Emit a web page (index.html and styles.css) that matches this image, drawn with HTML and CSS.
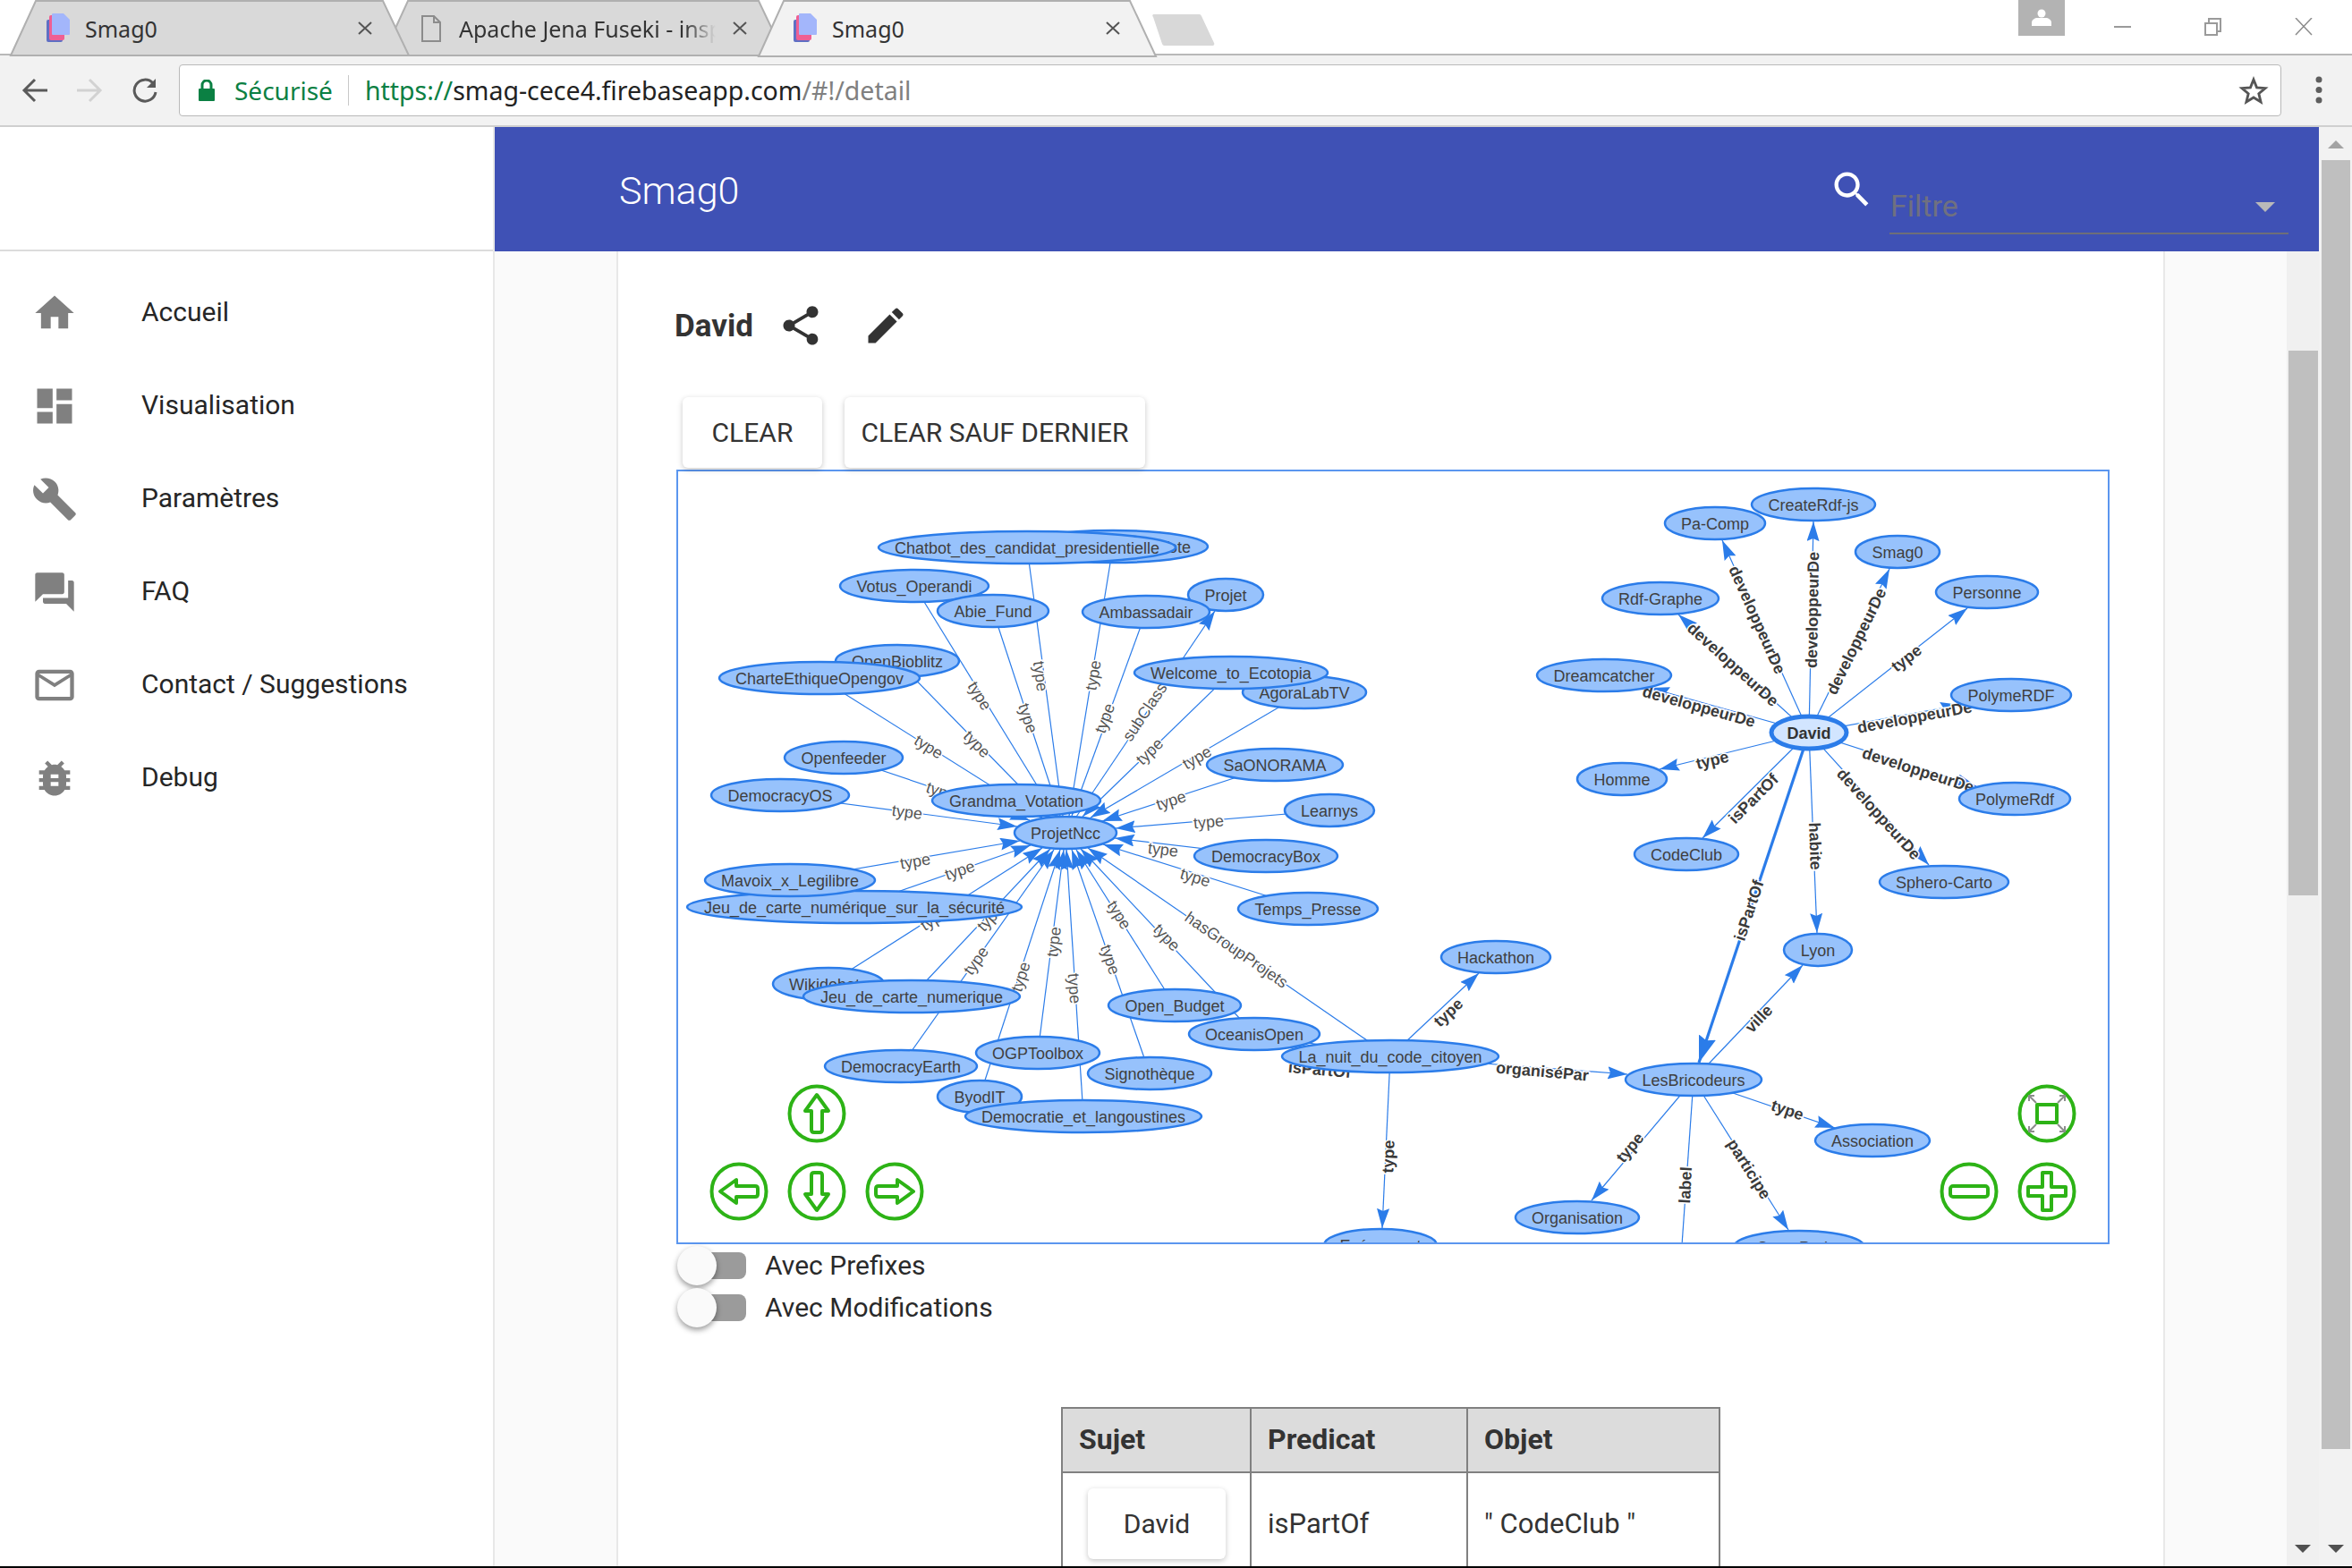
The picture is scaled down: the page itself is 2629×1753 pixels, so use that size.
FILE: index.html
```html
<!DOCTYPE html>
<html lang="fr">
<head>
<meta charset="utf-8">
<title>Smag0</title>
<link rel="stylesheet" href="styles.css">
</head>
<body>
<div class="window">
  <div class="tabstrip">
    <div class="tab tab-a">
      <svg class="tab-shape" width="445" height="61"><polygon points="0,61 28,0 416,0 445,61"/></svg>
      <svg class="favicon" width="28" height="34" viewBox="0 0 28 34"><rect x="1" y="7" width="18" height="25" rx="2" fill="#5f6fc4"/><rect x="4" y="2" width="17" height="28" rx="2" fill="#ef5f93"/><path d="M7 1a1 1 0 0 1 1-1h12l7 7v16a1 1 0 0 1-1 1H8a1 1 0 0 1-1-1z" fill="#a3b6fb"/></svg>
      <span class="tab-title">Smag0</span>
      <svg class="tab-close" width="16" height="15" viewBox="0 0 16 15"><path d="M1 1l14 13M15 1L1 14"/></svg>
    </div>
    <div class="tab tab-b">
      <svg class="tab-shape" width="449" height="61"><polygon points="0,61 28,0 420,0 449,61"/></svg>
      <svg class="docicon" width="22" height="30" viewBox="0 0 22 30"><path d="M1 1h13l7 7v21H1zM14 1v7h7"/></svg>
      <span class="tab-title tab-fade">Apache Jena Fuseki - inspect</span>
      <svg class="tab-close" width="16" height="15" viewBox="0 0 16 15"><path d="M1 1l14 13M15 1L1 14"/></svg>
    </div>
    <div class="tab tab-c">
      <svg class="tab-shape tab-shape-active" width="444" height="62"><polygon points="0,62 28,0 415,0 444,62"/></svg>
      <svg class="favicon" width="28" height="34" viewBox="0 0 28 34"><rect x="1" y="7" width="18" height="25" rx="2" fill="#5f6fc4"/><rect x="4" y="2" width="17" height="28" rx="2" fill="#ef5f93"/><path d="M7 1a1 1 0 0 1 1-1h12l7 7v16a1 1 0 0 1-1 1H8a1 1 0 0 1-1-1z" fill="#a3b6fb"/></svg>
      <span class="tab-title">Smag0</span>
      <svg class="tab-close" width="16" height="15" viewBox="0 0 16 15"><path d="M1 1l14 13M15 1L1 14"/></svg>
    </div>
    <svg class="newtab" width="70" height="35" viewBox="0 0 70 35"><path d="M4 0h48a3 3 0 0 1 3 2l14 30a2 2 0 0 1-2 3H14a3 3 0 0 1-3-2L1 3a2 2 0 0 1 3-3z"/></svg>
    <div class="profile"><svg width="24" height="20" viewBox="0 0 24 20"><circle cx="12" cy="5" r="4.500"/><path d="M1 19v-4c0-3 4-5 6-5h10c2 0 6 2 6 5v4z"/></svg></div>
    <div class="winctl">
      <svg width="20" height="20" viewBox="0 0 20 20"><path d="M0 10h19" class="wc"/></svg>
      <svg width="20" height="20" viewBox="0 0 20 20"><path d="M1 6h13v13H1zM5 6V1h13v14h-4" class="wc"/></svg>
      <svg width="20" height="20" viewBox="0 0 20 20"><path d="M1 0l18 19M19 0L1 19" class="wcx"/></svg>
    </div>
  </div>

  <div class="toolbar">
    <svg class="tool" width="30" height="28" viewBox="0 0 30 28"><path d="M29 14H4M15 2L3 14l12 12" class="tool-dark"/></svg>
    <svg class="tool" width="30" height="28" viewBox="0 0 30 28"><path d="M1 14h25M15 2l12 12-12 12" class="tool-light"/></svg>
    <svg class="tool" width="30" height="28" viewBox="0 0 30 28"><path d="M25 6a12 12 0 1 0 3 10" class="tool-dark"/><path d="M28 1v10H18z" class="tool-fill"/></svg>
    <div class="address">
      <svg class="lock" width="18" height="24" viewBox="0 0 18 24"><path d="M4 10V6a5 5 0 0 1 10 0v4" class="lock-arc"/><rect y="10" width="18" height="14" rx="1" class="lock-body"/></svg>
      <span class="secure">Sécurisé</span>
      <span class="addr-sep"></span>
      <span class="url"><span class="url-scheme">https://</span><span class="url-host">smag-cece4.firebaseapp.com</span><span class="url-path">/#!/detail</span></span>
      <svg class="star" width="36" height="34" viewBox="0 0 24 24"><path d="M12 3.500l2.500 6.300 6.700.5-5.100 4.300 1.600 6.500L12 17.600l-5.700 3.500 1.600-6.500-5.100-4.300 6.700-.5z"/></svg>
    </div>
    <svg class="dots" width="10" height="34" viewBox="0 0 10 34"><circle cx="5" cy="5" r="3.500"/><circle cx="5" cy="16.500" r="3.500"/><circle cx="5" cy="28" r="3.500"/></svg>
  </div>

  <div class="app">
    <aside class="sidebar">
      <div class="side-top"></div>
      <nav class="side-nav">
        <a class="nav-item"><svg class="nav-icon" viewBox="0 0 24 24"><path d="M10 20v-6h4v6h5v-8h3L12 3 2 12h3v8z"/></svg><span>Accueil</span></a>
        <a class="nav-item"><svg class="nav-icon" viewBox="0 0 24 24"><path d="M3 13h8V3H3v10zm0 8h8v-6H3v6zm10 0h8V11h-8v10zm0-18v6h8V3h-8z"/></svg><span>Visualisation</span></a>
        <a class="nav-item"><svg class="nav-icon" viewBox="0 0 24 24"><path d="M22.700 19l-9.100-9.100c.9-2.300.4-5-1.500-6.900-2-2-5-2.400-7.400-1.300L9 6 6 9 1.600 4.700C.4 7.100.9 10.100 2.900 12.100c1.900 1.900 4.600 2.400 6.900 1.500l9.100 9.100c.4.400 1 .4 1.400 0l2.300-2.300c.5-.4.500-1.100.1-1.400z"/></svg><span>Paramètres</span></a>
        <a class="nav-item"><svg class="nav-icon" viewBox="0 0 24 24"><path d="M21 6h-2v9H6v2c0 .55.45 1 1 1h11l4 4V7c0-.55-.45-1-1-1zm-4 6V3c0-.55-.45-1-1-1H3c-.55 0-1 .45-1 1v14l4-4h10c.55 0 1-.45 1-1z"/></svg><span>FAQ</span></a>
        <a class="nav-item"><svg class="nav-icon" viewBox="0 0 24 24"><path d="M20 4H4c-1.100 0-1.990.9-1.990 2L2 18c0 1.100.9 2 2 2h16c1.100 0 2-.9 2-2V6c0-1.100-.9-2-2-2zm0 14H4V8l8 5 8-5v10zm-8-7L4 6h16l-8 5z"/></svg><span>Contact / Suggestions</span></a>
        <a class="nav-item"><svg class="nav-icon" viewBox="0 0 24 24"><path d="M20 8h-2.810c-.45-.78-1.070-1.450-1.820-1.960L17 4.410 15.590 3l-2.170 2.170C12.960 5.060 12.490 5 12 5c-.49 0-.96.06-1.410.17L8.410 3 7 4.410l1.620 1.630C7.880 6.550 7.260 7.220 6.810 8H4v2h2.090c-.05.33-.09.66-.09 1v1H4v2h2v1c0 .34.04.67.09 1H4v2h2.810c1.040 1.790 2.970 3 5.190 3s4.150-1.210 5.190-3H20v-2h-2.090c.05-.33.09-.66.09-1v-1h2v-2h-2v-1c0-.34-.04-.67-.09-1H20V8zm-6 8h-4v-2h4v2zm0-4h-4v-2h4v2z"/></svg><span>Debug</span></a>
      </nav>
    </aside>

    <div class="main">
      <header class="topbar">
        <span class="app-title">Smag0</span>
        <svg class="search" viewBox="0 0 24 24"><path d="M15.500 14h-.79l-.28-.27C15.410 12.590 16 11.110 16 9.500 16 5.910 13.090 3 9.500 3S3 5.910 3 9.500 5.910 16 9.500 16c1.610 0 3.090-.59 4.230-1.570l.27.28v.79l5 4.990L20.490 19l-4.990-5zm-6 0C7.010 14 5 11.990 5 9.500S7.010 5 9.500 5 14 7.010 14 9.500 11.990 14 9.500 14z"/></svg>
        <div class="filter"><span class="filter-label">Filtre</span><span class="filter-arrow"></span></div>
      </header>
      <div class="content-row">
        <div class="gutter"></div>
        <section class="card">
          <div class="title-row">
            <h1 class="subject">David</h1>
            <svg class="title-icon" viewBox="0 0 24 24"><path d="M18 16.080c-.76 0-1.440.3-1.960.77L8.910 12.700c.05-.23.09-.46.09-.7s-.04-.47-.09-.7l7.050-4.110c.54.5 1.250.81 2.040.81 1.660 0 3-1.340 3-3s-1.340-3-3-3-3 1.340-3 3c0 .24.04.47.09.7L8.040 9.810C7.500 9.310 6.790 9 6 9c-1.660 0-3 1.340-3 3s1.340 3 3 3c.79 0 1.500-.31 2.040-.81l7.120 4.160c-.05.21-.08.43-.08.65 0 1.610 1.310 2.920 2.920 2.920 1.610 0 2.920-1.310 2.920-2.920s-1.310-2.920-2.920-2.920z"/></svg>
            <svg class="title-icon title-icon-edit" viewBox="0 0 24 24"><path d="M3 17.250V21h3.750L17.810 9.940l-3.750-3.750L3 17.250zM20.710 7.040c.39-.39.39-1.020 0-1.410l-2.340-2.340c-.39-.39-1.020-.39-1.410 0l-1.830 1.830 3.750 3.750 1.830-1.830z"/></svg>
          </div>
          <div class="btn-row">
            <button class="btn btn-clear">CLEAR</button>
            <button class="btn btn-sauf">CLEAR SAUF DERNIER</button>
          </div>

          <div class="graph">
            <svg class="graph-svg" width="1598" height="862" viewBox="758 527 1598 862">
              <defs>
                <marker id="ah" markerUnits="userSpaceOnUse" markerWidth="23" markerHeight="15" refX="22" refY="7" orient="auto"><path d="M0 0L22 7 0 14 3 7z" fill="#2b7ce9"/></marker>
                <marker id="ahb" markerUnits="userSpaceOnUse" markerWidth="31" markerHeight="21" refX="30" refY="10" orient="auto"><path d="M0 0L30 10 0 20 4 10z" fill="#2b7ce9"/></marker>
                <g id="ctl-arrow"><circle r="30.500" class="ctl-ring"/><path d="M0-21L13-3H6V18Q6 21 3 21H-3Q-6 21-6 18V-3H-13Z" class="ctl-mark"/></g>
              </defs>

              <g class="edges">
                <line x1="1148" y1="612" x2="1188" y2="912" marker-end="url(#ah)"/>
                <line x1="1244" y1="611" x2="1195" y2="912" marker-end="url(#ah)"/>
                <line x1="1022" y1="655" x2="1180" y2="912" marker-end="url(#ah)"/>
                <line x1="1110" y1="683" x2="1185" y2="912" marker-end="url(#ah)"/>
                <line x1="1281" y1="684" x2="1198" y2="912" marker-end="url(#ah)"/>
                <line x1="1003" y1="739" x2="1173" y2="913" marker-end="url(#ah)"/>
                <line x1="916" y1="758" x2="1164" y2="914" marker-end="url(#ah)"/>
                <line x1="1376" y1="752" x2="1210" y2="913" marker-end="url(#ah)"/>
                <line x1="1458" y1="774" x2="1219" y2="914" marker-end="url(#ah)"/>
                <line x1="943" y1="847" x2="1151" y2="917" marker-end="url(#ah)"/>
                <line x1="872" y1="889" x2="1137" y2="924" marker-end="url(#ah)"/>
                <line x1="1136" y1="895" x2="1165" y2="914" marker-end="url(#ah)"/>
                <line x1="1425" y1="855" x2="1232" y2="918" marker-end="url(#ah)"/>
                <line x1="1486" y1="906" x2="1247" y2="926" marker-end="url(#ah)"/>
                <line x1="1415" y1="957" x2="1246" y2="937" marker-end="url(#ah)"/>
                <line x1="1462" y1="1016" x2="1233" y2="944" marker-end="url(#ah)"/>
                <line x1="883" y1="984" x2="1140" y2="940" marker-end="url(#ah)"/>
                <line x1="955" y1="1014" x2="1152" y2="945" marker-end="url(#ah)"/>
                <line x1="926" y1="1100" x2="1165" y2="948" marker-end="url(#ah)"/>
                <line x1="1019" y1="1114" x2="1174" y2="949" marker-end="url(#ah)"/>
                <line x1="1007" y1="1192" x2="1178" y2="950" marker-end="url(#ah)"/>
                <line x1="1095" y1="1226" x2="1185" y2="950" marker-end="url(#ah)"/>
                <line x1="1160" y1="1177" x2="1189" y2="950" marker-end="url(#ah)"/>
                <line x1="1211" y1="1248" x2="1192" y2="950" marker-end="url(#ah)"/>
                <line x1="1285" y1="1200" x2="1198" y2="950" marker-end="url(#ah)"/>
                <line x1="1313" y1="1124" x2="1203" y2="950" marker-end="url(#ah)"/>
                <line x1="1402" y1="1156" x2="1208" y2="949" marker-end="url(#ah)"/>
                <line x1="1554" y1="1181" x2="1216" y2="948" marker-end="url(#ah)"/>
                <line x1="1191" y1="931" x2="1358" y2="683" marker-end="url(#ah)"/>
                <line x1="1402" y1="1156" x2="1554" y2="1181"/>

                <line x1="2022" y1="819" x2="1925" y2="604" marker-end="url(#ah)"/>
                <line x1="2022" y1="819" x2="2027" y2="583" marker-end="url(#ah)"/>
                <line x1="2022" y1="819" x2="2112" y2="636" marker-end="url(#ah)"/>
                <line x1="2022" y1="819" x2="2199" y2="680" marker-end="url(#ah)"/>
                <line x1="2022" y1="819" x2="1876" y2="687" marker-end="url(#ah)"/>
                <line x1="2022" y1="819" x2="1844" y2="769" marker-end="url(#ah)"/>
                <line x1="2022" y1="819" x2="2191" y2="788" marker-end="url(#ah)"/>
                <line x1="2022" y1="819" x2="1855" y2="860" marker-end="url(#ah)"/>
                <line x1="2022" y1="819" x2="2209" y2="879" marker-end="url(#ah)"/>
                <line x1="2022" y1="819" x2="1903" y2="937" marker-end="url(#ah)"/>
                <line x1="2022" y1="819" x2="2156" y2="967" marker-end="url(#ah)"/>
                <line x1="2022" y1="819" x2="2031" y2="1043" marker-end="url(#ah)"/>
                <line x1="2022" y1="819" x2="1899" y2="1188" marker-end="url(#ahb)" class="edge-thick"/>
                <line x1="1554" y1="1181" x2="1653" y2="1088" marker-end="url(#ah)"/>
                <line x1="1554" y1="1181" x2="1819" y2="1201" marker-end="url(#ah)"/>
                <line x1="1554" y1="1181" x2="1545" y2="1373" marker-end="url(#ah)"/>
                <line x1="1893" y1="1207" x2="2015" y2="1079" marker-end="url(#ah)"/>
                <line x1="1893" y1="1207" x2="2051" y2="1261" marker-end="url(#ah)"/>
                <line x1="1893" y1="1207" x2="1779" y2="1342" marker-end="url(#ah)"/>
                <line x1="1893" y1="1207" x2="1880" y2="1392"/>
                <line x1="1893" y1="1207" x2="1999" y2="1375" marker-end="url(#ah)"/>
              </g>

              <g class="elabels">
                <text transform="translate(1095 778) rotate(58.500)">type</text>
                <text transform="translate(1149 803) rotate(72)">type</text>
                <text transform="translate(1163 756) rotate(82)">type</text>
                <text transform="translate(1222 755) rotate(-80)">type</text>
                <text transform="translate(1235 803) rotate(-70)">type</text>
                <text transform="translate(1285 788) rotate(-56)">subClassOf</text>
                <text transform="translate(1285 840) rotate(-44)">type</text>
                <text transform="translate(1338 847) rotate(-30)">type</text>
                <text transform="translate(1309 895) rotate(-18)">type</text>
                <text transform="translate(1351 919) rotate(-5)">type</text>
                <text transform="translate(1300 950) rotate(6.600)">type</text>
                <text transform="translate(1336 981) rotate(17.400)">type</text>
                <text transform="translate(1038 835) rotate(32)">type</text>
                <text transform="translate(1092 832) rotate(45.500)">type</text>
                <text transform="translate(1052 885) rotate(18.700)">type</text>
                <text transform="translate(1014 908) rotate(7.500)">type</text>
                <text transform="translate(1023 963) rotate(-10)">type</text>
                <text transform="translate(1073 973) rotate(-19)">type</text>
                <text transform="translate(1045 1027) rotate(-32.500)">type</text>
                <text transform="translate(1107 1026) rotate(-46.700)">type</text>
                <text transform="translate(1091 1074) rotate(-54.800)">type</text>
                <text transform="translate(1141 1092) rotate(-72)">type</text>
                <text transform="translate(1178 1053) rotate(-83)">type</text>
                <text transform="translate(1201 1105) rotate(86)">type</text>
                <text transform="translate(1241 1073) rotate(71)">type</text>
                <text transform="translate(1251 1023) rotate(58)">type</text>
                <text transform="translate(1304 1048) rotate(47)">type</text>
                <text transform="translate(1382 1062) rotate(34.600)">hasGroupProjets</text>
              </g>
              <g class="elabels elabels-dark">
                <text transform="translate(1475 1196) rotate(5)">isPartOf</text>
                <text transform="translate(1964 693) rotate(66)">developpeurDe</text>
                <text transform="translate(2026 682) rotate(-89)">developpeurDe</text>
                <text transform="translate(2075 717) rotate(-64)">developpeurDe</text>
                <text transform="translate(2131 736) rotate(-38)">type</text>
                <text transform="translate(1937 743) rotate(42)">developpeurDe</text>
                <text transform="translate(1899 790) rotate(15.600)">developpeurDe</text>
                <text transform="translate(2140 802) rotate(-10.500)">developpeurDe</text>
                <text transform="translate(1914 850) rotate(-14)">type</text>
                <text transform="translate(2144 861) rotate(17.800)">developpeurDe</text>
                <text transform="translate(1960 893) rotate(-45)">isPartOf</text>
                <text transform="translate(2100 910) rotate(48)">developpeurDe</text>
                <text transform="translate(2029 946) rotate(88)">habite</text>
                <text transform="translate(1955 1018) rotate(-71.600)">isPartOf</text>
                <text transform="translate(1966 1139) rotate(-46)">ville</text>
                <text transform="translate(1619 1132) rotate(-43)">type</text>
                <text transform="translate(1724 1198) rotate(5)">organiséPar</text>
                <text transform="translate(1552 1293) rotate(-88)">type</text>
                <text transform="translate(1998 1241) rotate(18.800)">type</text>
                <text transform="translate(1822 1283) rotate(-50)">type</text>
                <text transform="translate(1884 1325) rotate(-87)">label</text>
                <text transform="translate(1955 1307) rotate(58)">participe</text>
              </g>

              <g class="nodes">
                <g><ellipse cx="1244" cy="611" rx="106" ry="18"/><text x="1331" y="611" class="nt-end">Vote</text></g>
                <g><ellipse cx="1148" cy="612" rx="166" ry="18"/><text x="1148" y="612">Chatbot_des_candidat_presidentielle</text></g>
                <g><ellipse cx="1022" cy="655" rx="83" ry="18"/><text x="1022" y="655">Votus_Operandi</text></g>
                <g><ellipse cx="1110" cy="683" rx="62" ry="18"/><text x="1110" y="683">Abie_Fund</text></g>
                <g><ellipse cx="1370" cy="665" rx="42" ry="18"/><text x="1370" y="665">Projet</text></g>
                <g><ellipse cx="1281" cy="684" rx="71" ry="18"/><text x="1281" y="684">Ambassadair</text></g>
                <g><ellipse cx="1003" cy="739" rx="69" ry="18"/><text x="1003" y="739">OpenBioblitz</text></g>
                <g><ellipse cx="916" cy="758" rx="112" ry="18"/><text x="916" y="758">CharteEthiqueOpengov</text></g>
                <g><ellipse cx="1458" cy="774" rx="69" ry="18"/><text x="1458" y="774">AgoraLabTV</text></g>
                <g><ellipse cx="1376" cy="752" rx="108" ry="18"/><text x="1376" y="752">Welcome_to_Ecotopia</text></g>
                <g><ellipse cx="943" cy="847" rx="66" ry="18"/><text x="943" y="847">Openfeeder</text></g>
                <g><ellipse cx="872" cy="889" rx="77" ry="18"/><text x="872" y="889">DemocracyOS</text></g>
                <g><ellipse cx="1136" cy="895" rx="94" ry="18"/><text x="1136" y="895">Grandma_Votation</text></g>
                <g><ellipse cx="1191" cy="931" rx="57" ry="18"/><text x="1191" y="931">ProjetNcc</text></g>
                <g><ellipse cx="1425" cy="855" rx="76" ry="18"/><text x="1425" y="855">SaONORAMA</text></g>
                <g><ellipse cx="1486" cy="906" rx="50" ry="18"/><text x="1486" y="906">Learnys</text></g>
                <g><ellipse cx="1415" cy="957" rx="80" ry="18"/><text x="1415" y="957">DemocracyBox</text></g>
                <g><ellipse cx="955" cy="1014" rx="187" ry="18"/><text x="955" y="1014">Jeu_de_carte_numérique_sur_la_sécurité</text></g>
                <g><ellipse cx="883" cy="984" rx="95" ry="18"/><text x="883" y="984">Mavoix_x_Legilibre</text></g>
                <g><ellipse cx="1462" cy="1016" rx="78" ry="18"/><text x="1462" y="1016">Temps_Presse</text></g>
                <g><ellipse cx="926" cy="1100" rx="62" ry="18"/><text x="926" y="1100">Wikidebats</text></g>
                <g><ellipse cx="1019" cy="1114" rx="121" ry="18"/><text x="1019" y="1114">Jeu_de_carte_numerique</text></g>
                <g><ellipse cx="1313" cy="1124" rx="74" ry="18"/><text x="1313" y="1124">Open_Budget</text></g>
                <g><ellipse cx="1402" cy="1156" rx="73" ry="18"/><text x="1402" y="1156">OceanisOpen</text></g>
                <g><ellipse cx="1554" cy="1181" rx="121" ry="18"/><text x="1554" y="1181">La_nuit_du_code_citoyen</text></g>
                <g><ellipse cx="1007" cy="1192" rx="85" ry="18"/><text x="1007" y="1192">DemocracyEarth</text></g>
                <g><ellipse cx="1160" cy="1177" rx="69" ry="18"/><text x="1160" y="1177">OGPToolbox</text></g>
                <g><ellipse cx="1285" cy="1200" rx="69" ry="18"/><text x="1285" y="1200">Signothèque</text></g>
                <g><ellipse cx="1095" cy="1226" rx="47" ry="18"/><text x="1095" y="1226">ByodIT</text></g>
                <g><ellipse cx="1211" cy="1248" rx="132" ry="18"/><text x="1211" y="1248">Democratie_et_langoustines</text></g>
                <g><ellipse cx="1543" cy="1392" rx="63" ry="18"/><text x="1543" y="1392">Evénement</text></g>

                <g><ellipse cx="2027" cy="564" rx="69" ry="18"/><text x="2027" y="564">CreateRdf-js</text></g>
                <g><ellipse cx="1917" cy="585" rx="56" ry="18"/><text x="1917" y="585">Pa-Comp</text></g>
                <g><ellipse cx="2121" cy="617" rx="47" ry="18"/><text x="2121" y="617">Smag0</text></g>
                <g><ellipse cx="2221" cy="662" rx="57" ry="18"/><text x="2221" y="662">Personne</text></g>
                <g><ellipse cx="1856" cy="669" rx="65" ry="18"/><text x="1856" y="669">Rdf-Graphe</text></g>
                <g><ellipse cx="1793" cy="755" rx="75" ry="18"/><text x="1793" y="755">Dreamcatcher</text></g>
                <g><ellipse cx="2248" cy="777" rx="67" ry="18"/><text x="2248" y="777">PolymeRDF</text></g>
                <g class="node-main"><ellipse cx="2022" cy="819" rx="42" ry="18"/><text x="2022" y="819">David</text></g>
                <g><ellipse cx="1813" cy="871" rx="50" ry="18"/><text x="1813" y="871">Homme</text></g>
                <g><ellipse cx="2252" cy="893" rx="62" ry="18"/><text x="2252" y="893">PolymeRdf</text></g>
                <g><ellipse cx="1885" cy="955" rx="58" ry="18"/><text x="1885" y="955">CodeClub</text></g>
                <g><ellipse cx="2173" cy="986" rx="72" ry="18"/><text x="2173" y="986">Sphero-Carto</text></g>
                <g><ellipse cx="2032" cy="1062" rx="38" ry="18"/><text x="2032" y="1062">Lyon</text></g>
                <g><ellipse cx="1672" cy="1070" rx="61" ry="18"/><text x="1672" y="1070">Hackathon</text></g>
                <g><ellipse cx="1893" cy="1207" rx="76" ry="18"/><text x="1893" y="1207">LesBricodeurs</text></g>
                <g><ellipse cx="2093" cy="1275" rx="64" ry="18"/><text x="2093" y="1275">Association</text></g>
                <g><ellipse cx="1763" cy="1361" rx="69" ry="18"/><text x="1763" y="1361">Organisation</text></g>
                <g><ellipse cx="2011" cy="1394" rx="73" ry="18"/><text x="2011" y="1394">SmagProjet</text></g>
              </g>

              <g class="controls">
                <use href="#ctl-arrow" transform="translate(913 1245)"/>
                <use href="#ctl-arrow" transform="translate(826 1332) rotate(-90)"/>
                <use href="#ctl-arrow" transform="translate(913 1332) rotate(180)"/>
                <use href="#ctl-arrow" transform="translate(1000 1332) rotate(90)"/>
                <g transform="translate(2288 1245)">
                  <circle r="30.500" class="ctl-ring"/>
                  <path d="M-20-14V-20H-14M14-20H20V-14M20 14V20H14M-14 20H-20V14M-20-20L-12-12M20-20L12-12M20 20L12 12M-20 20L-12 12" class="ctl-grey"/>
                  <rect x="-11" y="-10" width="22" height="20" class="ctl-mark"/>
                </g>
                <g transform="translate(2201 1332)">
                  <circle r="30.500" class="ctl-ring"/>
                  <rect x="-21" y="-6" width="42" height="12" rx="3" class="ctl-mark"/>
                </g>
                <g transform="translate(2288 1332)">
                  <circle r="30.500" class="ctl-ring"/>
                  <path d="M-5-21H5V-5H21V5H5V21H-5V5H-21V-5H-5Z" class="ctl-mark"/>
                </g>
              </g>
            </svg>
          </div>

          <div class="toggle-row"><span class="toggle"><span class="toggle-track"></span><span class="toggle-thumb"></span></span><span class="toggle-label">Avec Prefixes</span></div>
          <div class="toggle-row"><span class="toggle"><span class="toggle-track"></span><span class="toggle-thumb"></span></span><span class="toggle-label">Avec Modifications</span></div>

          <table class="triples">
            <colgroup><col class="col-s"><col class="col-p"><col class="col-o"></colgroup>
            <thead><tr><th>Sujet</th><th>Predicat</th><th>Objet</th></tr></thead>
            <tbody><tr><td><button class="btn btn-subject">David</button></td><td>isPartOf</td><td>" CodeClub "</td></tr></tbody>
          </table>
        </section>
        <div class="gutter gutter-right"></div>
        <div class="inner-scroll"><div class="thumb inner-thumb"></div><span class="sb-down"></span></div>
      </div>
    </div>

    <div class="outer-scroll"><span class="sb-up"></span><div class="thumb outer-thumb"></div><span class="sb-down"></span></div>
  </div>
  <div class="bottom-line"></div>
</div>
</body>
</html>
```
FILE: styles.css
```css
* { box-sizing: border-box; }
html, body { margin: 0; padding: 0; }
body { font-family: Roboto, "Liberation Sans", sans-serif; color: #212121; background: #fff; }
.window { width: 2629px; height: 1753px; overflow: hidden; display: flex; flex-direction: column; background: #fff; }

/* Browser tab strip */
.tabstrip { height: 62px; padding: 1px 0 0 12px; display: flex; align-items: flex-start; background: #fff; border-bottom: 2px solid #b8b8b8; position: relative; font-family: "Noto Sans", "Open Sans", sans-serif; }
.tab { height: 61px; position: relative; display: flex; align-items: center; font-size: 25px; color: #333; flex: none; }
.tab-shape { position: absolute; left: 0; top: 0; overflow: visible; }
.tab-shape polygon { fill: #d9d9d9; stroke: #b0b0b0; stroke-width: 2px; }
.tab-shape-active polygon { fill: #f2f2f2; }
.tab-a { width: 445px; padding: 0 41px 0 39px; z-index: 2; }
.tab-b { width: 449px; padding: 0 42px 0 43px; margin-left: -29px; z-index: 1; }
.tab-c { width: 444px; padding: 0 40px 0 38px; margin-left: -29px; z-index: 3; }
.favicon, .docicon, .tab-close { position: relative; flex: none; }
.favicon { margin-right: 16px; }
.docicon { margin-right: 20px; }
.docicon path { fill: none; stroke: #8c8c8c; stroke-width: 2px; }
.tab-title { position: relative; flex: 1; min-width: 0; overflow: hidden; white-space: nowrap; }
.tab-fade { margin-right: 19px; -webkit-mask-image: linear-gradient(90deg, #000 88%, transparent); mask-image: linear-gradient(90deg, #000 88%, transparent); }
.tab-close path { fill: none; stroke: #555; stroke-width: 2px; }
.newtab { margin: 15px 0 0 -4px; flex: none; }
.newtab path { fill: #d8d8d8; }
.profile { margin: -1px 0 0 898px; width: 52px; height: 40px; background: #b3b3b3; display: flex; align-items: center; justify-content: center; flex: none; }
.profile svg { fill: #fff; }
.winctl { display: flex; gap: 81px; margin: 19px 0 0 55px; }
.wc { fill: none; stroke: #9a9a9a; stroke-width: 2px; }
.wcx { fill: none; stroke: #8c8c8c; stroke-width: 1.5px; }

/* Browser toolbar */
.toolbar { height: 80px; padding-left: 24px; display: flex; align-items: center; gap: 31px; background: #f2f2f2; border-bottom: 2px solid #cfcfcf; font-family: "Noto Sans", "Open Sans", sans-serif; }
.tool-dark { fill: none; stroke: #5a5a5a; stroke-width: 3px; }
.tool-light { fill: none; stroke: #d2d2d2; stroke-width: 3px; }
.tool-fill { fill: #5a5a5a; }
.address { width: 2350px; height: 58px; margin-left: -7px; padding: 0 12px 0 21px; background: #fff; border: 1.5px solid #b9b9b9; border-radius: 4px; display: flex; align-items: center; font-size: 28px; white-space: nowrap; }
.lock-arc { fill: none; stroke: #0b8043; stroke-width: 3px; }
.lock-body { fill: #0b8043; }
.secure { margin-left: 22px; color: #0b8043; }
.addr-sep { width: 1px; height: 34px; margin: 0 18px 0 17px; background: #c8c8c8; }
.url { font-size: 28.500px; }
.url-scheme { color: #0b8043; }
.url-host { color: #222; }
.url-path { color: #808080; }
.star { margin-left: auto; }
.star path { fill: none; stroke: #555; stroke-width: 2px; }
.dots { margin-left: 6px; fill: #5e5e5e; }

/* App frame */
.app { flex: 1; min-height: 0; display: flex; }
.sidebar { width: 553px; flex: none; background: #fff; border-right: 2px solid #e8e8e8; }
.side-top { height: 139px; border-bottom: 2px solid #dcdcdc; }
.side-nav { padding-top: 17px; display: flex; flex-direction: column; }
.nav-item { height: 104px; padding-left: 35px; display: flex; align-items: center; gap: 71px; font-size: 30px; color: #262626; }
.nav-item span { padding-bottom: 3px; }
.nav-icon { width: 52px; height: 52px; fill: #808080; flex: none; }

.main { flex: 1; min-width: 0; display: flex; flex-direction: column; }
.topbar { height: 139px; flex: none; padding: 0 34px 0 139px; background: #3f51b5; display: flex; align-items: center; }
.app-title { color: #fff; font-size: 43px; font-weight: 300; padding-top: 2px; }
.search { width: 52px; height: 52px; margin-left: auto; fill: #fff; }
.filter { width: 446px; height: 50px; margin-left: 16px; align-self: flex-end; margin-bottom: 19px; border-bottom: 2px solid #6e6e78; display: flex; justify-content: space-between; align-items: flex-start; }
.filter-label { color: #6f7080; font-size: 34px; line-height: 36px; padding-left: 1px; }
.filter-arrow { width: 0; height: 0; margin: 14px 15px 0 0; border-left: 11px solid transparent; border-right: 11px solid transparent; border-top: 11px solid #b9b9b9; }

.content-row { flex: 1; min-height: 0; display: flex; }
.gutter { width: 136px; flex: none; background: #fafafa; }
.gutter-right { width: 136px; }
.card { width: 1731px; flex: none; padding: 57px 0 0 65px; overflow: hidden; background: #fff; border-left: 2px solid #e8e8e8; border-right: 2px solid #e8e8e8; }

.title-row { height: 52px; margin-left: -2px; display: flex; align-items: center; }
.subject { margin: 0 27px 0 0; font-size: 35px; font-weight: 700; color: #333; }
.title-icon { width: 52px; height: 52px; fill: #333; flex: none; }
.title-icon-edit { margin-left: 43px; }

.btn-row { display: flex; gap: 25px; margin: 54px 0 2px 7px; }
.btn { height: 79px; padding: 0; background: #fff; border: 0; border-radius: 6px; font-family: Roboto, sans-serif; font-size: 30px; color: #333; box-shadow: 0 2px 6px rgba(0,0,0,.22); }
.btn-clear { width: 156px; }
.btn-sauf { width: 336px; }

.graph { width: 1602px; height: 866px; background: #fff; border: 2px solid #5b96ef; }
.graph-svg { display: block; font-family: "Liberation Sans", Arial, sans-serif; }
.edges line { stroke: #2b7ce9; stroke-width: 1.2px; }
.edges .edge-thick { stroke-width: 3.2px; }
.elabels text { font-size: 18px; fill: #555; text-anchor: middle; dominant-baseline: central; paint-order: stroke; stroke: #fff; stroke-width: 3px; }
.elabels-dark text { font-weight: 700; fill: #3a3a3a; }
.nodes ellipse { fill: #97c2fc; stroke: #2b7ce9; stroke-width: 2.5px; }
.nodes text { font-size: 18px; fill: #3f3f3f; text-anchor: middle; dominant-baseline: central; transform: translateY(1px); }
.nodes .nt-end { text-anchor: end; }
.node-main ellipse { fill: #d2e5ff; stroke-width: 5px; }
.nodes .node-main text { font-weight: 700; fill: #333; }
.ctl-ring { fill: #fff; stroke: #2db316; stroke-width: 4px; }
.ctl-mark { fill: #fff; stroke: #2db316; stroke-width: 4px; stroke-linejoin: round; }
.ctl-grey { fill: none; stroke: #8c8c8c; stroke-width: 2px; }

.toggle-row { height: 47px; display: flex; align-items: center; gap: 21px; font-size: 30px; color: #2a2a2a; }
.toggle { width: 78px; height: 44px; position: relative; flex: none; display: flex; align-items: center; justify-content: flex-end; }
.toggle-track { width: 64px; height: 30px; background: #9b9b9b; border-radius: 8px; }
.toggle-thumb { position: absolute; left: 1px; top: 0; width: 44px; height: 44px; background: #fafafa; border-radius: 50%; box-shadow: 0 3px 6px rgba(0,0,0,.4); }

.triples { margin: 88px 0 0 430px; width: 735px; table-layout: fixed; border-collapse: collapse; font-size: 31px; color: #333; }
.col-s { width: 211px; }
.col-p { width: 242px; }
.col-o { width: 282px; }
.triples th, .triples td { border: 2px solid #808080; padding: 0 0 0 18px; text-align: left; }
.triples th { height: 72px; padding-bottom: 3px; background: #dcdcdc; font-size: 32px; font-weight: 700; }
.triples td { height: 114px; }
.btn-subject { width: 154px; margin-left: 10px; display: block; }

.inner-scroll { width: 36px; flex: none; background: #f0f0f0; display: flex; flex-direction: column; align-items: center; }
.outer-scroll { width: 37px; flex: none; background: #f2f2f2; display: flex; flex-direction: column; align-items: center; }
.thumb { background: #bfbfbf; flex: none; }
.inner-thumb { width: 33px; height: 609px; margin-top: 111px; }
.outer-thumb { width: 32px; height: 1441px; margin-top: 13px; }
.sb-up { width: 0; height: 0; margin-top: 15px; border-left: 9px solid transparent; border-right: 9px solid transparent; border-bottom: 9px solid #a3a3a3; }
.sb-down { width: 0; height: 0; margin: auto 0 15px; border-left: 9px solid transparent; border-right: 9px solid transparent; border-top: 9px solid #505050; }

.bottom-line { height: 2px; flex: none; background: #000; }
```
